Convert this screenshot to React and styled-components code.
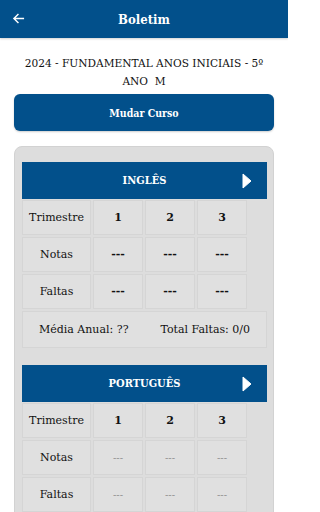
import React from "react";
import styled, { createGlobalStyle } from "styled-components";

const subjects = [
  { name: "INGLÊS", notas: ["---", "---", "---"], faltas: ["---", "---", "---"], dim: false },
  { name: "PORTUGUÊS", notas: ["---", "---", "---"], faltas: ["---", "---", "---"], dim: true },
];

const GlobalStyle = createGlobalStyle`
  html, body {
    margin: 0;
    background: #ffffff;
    overflow-x: hidden;
  }
  body {
    font-family: "DejaVu Serif", "Liberation Serif", serif;
    color: #161616;
  }
`;

const BackIcon = () => (
  <svg width="13" height="13" viewBox="0 0 24 24" fill="none">
    <path
      d="M21 12H4M11 4.5L3.5 12l7.5 7.5"
      stroke="#ffffff"
      strokeWidth="2.6"
      strokeLinecap="square"
    />
  </svg>
);

const PlayIcon = () => (
  <svg width="10" height="16" viewBox="0 0 10 16">
    <path d="M1 1 L9 8 L1 15 Z" fill="#ffffff" stroke="#ffffff" strokeLinejoin="round" />
  </svg>
);

const SubjectCard = ({ subject }) => (
  <Card>
    <CardHeader>
      <CardTitle>{subject.name}</CardTitle>
      <Arrow>
        <PlayIcon />
      </Arrow>
    </CardHeader>
    <Grid>
      <Cell>Trimestre</Cell>
      {[1, 2, 3].map((n) => (
        <Cell key={n} $bold>
          {n}
        </Cell>
      ))}
      <Cell>Notas</Cell>
      {subject.notas.map((v, i) => (
        <Cell key={"n" + i} $bold={!subject.dim} $dim={subject.dim}>
          {v}
        </Cell>
      ))}
      <Cell>Faltas</Cell>
      {subject.faltas.map((v, i) => (
        <Cell key={"f" + i} $bold={!subject.dim} $dim={subject.dim}>
          {v}
        </Cell>
      ))}
    </Grid>
    <Summary>
      <span>Média Anual: ??</span>
      <span>Total Faltas: 0/0</span>
    </Summary>
  </Card>
);

const App = () => {
  return (
    <>
      <GlobalStyle />
      <Page>
        <TopBar>
          <BackButton>
            <BackIcon />
          </BackButton>
          <TopTitle>Boletim</TopTitle>
        </TopBar>
        <CourseTitle>2024 - FUNDAMENTAL ANOS INICIAIS - 5º ANO&nbsp; M</CourseTitle>
        <ChangeButton>Mudar Curso</ChangeButton>
        <Panel>
          {subjects.map((s) => (
            <SubjectCard key={s.name} subject={s} />
          ))}
        </Panel>
      </Page>
    </>
  );
};

const Page = styled.div`
  width: 288px;
  height: 512px;
  overflow: hidden;
  display: flex;
  flex-direction: column;
`;

const TopBar = styled.div`
  position: relative;
  flex-shrink: 0;
  height: 38px;
  background: #02508b;
  display: flex;
  align-items: center;
  justify-content: center;
  box-shadow: 0 1px 2px rgba(0, 0, 0, 0.18);
`;

const BackButton = styled.div`
  position: absolute;
  left: 12px;
  top: 12px;
  display: flex;
`;

const Heading = styled.span`
  font-family: "DejaVu Serif Condensed", "DejaVu Serif", serif;
  font-stretch: condensed;
  font-weight: 700;
  color: #ffffff;
`;

const TopTitle = styled(Heading)`
  font-size: 13px;
`;

const CourseTitle = styled.p`
  margin: 16px 18px 0;
  text-align: center;
  font-size: 10.6px;
  line-height: 18px;
  color: #111111;
`;

const ChangeButton = styled.button`
  flex-shrink: 0;
  margin: 4px 14px 0;
  height: 37px;
  border: none;
  border-radius: 6px;
  background: #02508b;
  color: #ffffff;
  font-family: "DejaVu Serif Condensed", "DejaVu Serif", serif;
  font-stretch: condensed;
  font-size: 10.5px;
  font-weight: 700;
  box-shadow: 0 1px 2px rgba(0, 0, 0, 0.2);
`;

const Panel = styled.div`
  flex-shrink: 0;
  margin: 15px 14px 0;
  padding: 15px 6px 20px 7px;
  background: #dddddd;
  border: 1px solid #d2d2d2;
  border-radius: 8px;
  display: flex;
  flex-direction: column;
  gap: 17px;
`;

const Card = styled.div`
  display: flex;
  flex-direction: column;
`;

const CardHeader = styled.div`
  position: relative;
  height: 37px;
  background: #02508b;
  display: flex;
  align-items: center;
  justify-content: center;
`;

const CardTitle = styled(Heading)`
  font-size: 11px;
`;

const Arrow = styled.span`
  position: absolute;
  right: 15px;
  top: 11px;
  display: flex;
`;

const Grid = styled.div`
  margin-top: 1px;
  display: grid;
  grid-template-columns: 69px 50px 50px 50px;
  grid-auto-rows: 35px;
  gap: 2px;
`;

const Cell = styled.div`
  display: flex;
  align-items: center;
  justify-content: center;
  background: #e0e0e0;
  border: 1px solid #d5d5d5;
  font-size: ${(p) => (p.$dim ? "10px" : "11px")};
  font-weight: ${(p) => (p.$bold ? 700 : 400)};
  color: ${(p) => (p.$dim ? "#8a8a8a" : "#111111")};
`;

const Summary = styled.div`
  margin-top: 2px;
  height: 35px;
  display: flex;
  align-items: center;
  justify-content: space-around;
  background: #e0e0e0;
  border: 1px solid #d5d5d5;
  font-size: 11px;
  color: #111111;
`;

export default App;
